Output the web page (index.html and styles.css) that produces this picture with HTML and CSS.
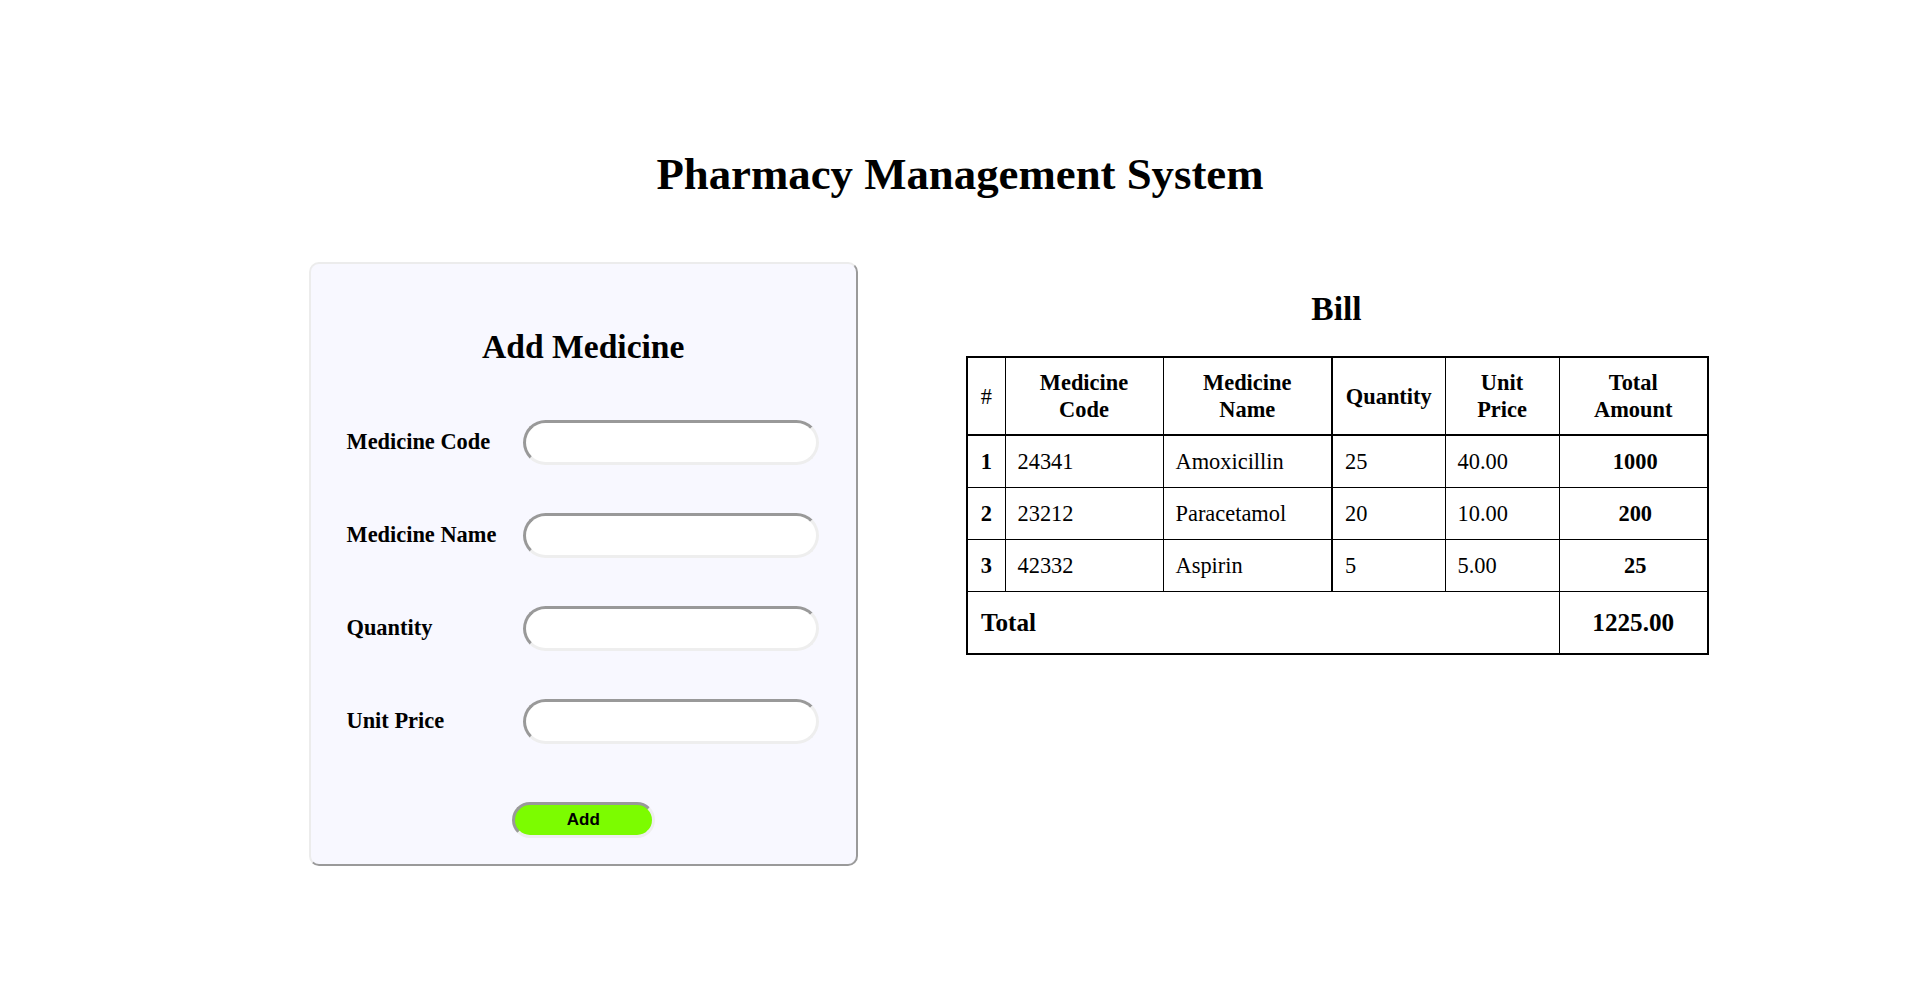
FILE: index.html
```html
<!DOCTYPE html>
<html lang="en">
<head>
<meta charset="utf-8">
<title>Pharmacy Management System</title>
<link rel="stylesheet" href="styles.css">
</head>
<body>
<header class="page-header">
  <h1 class="page-title">Pharmacy Management System</h1>
</header>
<main class="content">
  <section class="card">
    <h2 class="card-title">Add Medicine</h2>
    <form class="med-form">
      <div class="form-row">
        <label class="form-label" for="code">Medicine Code</label>
        <input class="form-input" id="code" type="text">
      </div>
      <div class="form-row">
        <label class="form-label" for="name">Medicine Name</label>
        <input class="form-input" id="name" type="text">
      </div>
      <div class="form-row">
        <label class="form-label" for="qty">Quantity</label>
        <input class="form-input" id="qty" type="text">
      </div>
      <div class="form-row">
        <label class="form-label" for="price">Unit Price</label>
        <input class="form-input" id="price" type="text">
      </div>
      <div class="form-actions">
        <button class="add-btn" type="button">Add</button>
      </div>
    </form>
  </section>
  <section class="bill">
    <h2 class="bill-title">Bill</h2>
    <table class="bill-table">
      <colgroup>
        <col class="c-num">
        <col class="c-code">
        <col class="c-name">
        <col class="c-qty">
        <col class="c-price">
        <col class="c-total">
      </colgroup>
      <thead>
        <tr>
          <th class="hash">#</th>
          <th class="wrap">Medicine Code</th>
          <th class="wrap split">Medicine Name</th>
          <th class="qty">Quantity</th>
          <th class="wrap">Unit Price</th>
          <th class="wrap">Total Amount</th>
        </tr>
      </thead>
      <tbody>
        <tr>
          <td class="idx">1</td>
          <td>24341</td>
          <td class="split">Amoxicillin</td>
          <td>25</td>
          <td>40.00</td>
          <td class="amount">1000</td>
        </tr>
        <tr>
          <td class="idx">2</td>
          <td>23212</td>
          <td class="split">Paracetamol</td>
          <td>20</td>
          <td>10.00</td>
          <td class="amount">200</td>
        </tr>
        <tr>
          <td class="idx">3</td>
          <td>42332</td>
          <td class="split">Aspirin</td>
          <td>5</td>
          <td>5.00</td>
          <td class="amount">25</td>
        </tr>
      </tbody>
      <tfoot>
        <tr class="total-row">
          <td class="total-label" colspan="5">Total</td>
          <td class="total-value">1225.00</td>
        </tr>
      </tfoot>
    </table>
  </section>
</main>
</body>
</html>
```
FILE: styles.css
```css
html, body {
  margin: 0;
  padding: 0;
  background: #ffffff;
}

body {
  font-family: "Liberation Serif", "Times New Roman", serif;
  font-size: 22.4px;
  color: #000000;
}

.page-header {
  padding-top: 148px;
  text-align: center;
}

.page-title {
  margin: 0;
  font-size: 44.8px;
  line-height: 52px;
  font-weight: bold;
}

.content {
  display: flex;
  align-items: flex-start;
  gap: 108px;
  margin-top: 62px;
  padding-left: 309px;
}

.card {
  box-sizing: border-box;
  width: 549px;
  height: 604px;
  padding: 63px 36px 0 35.5px;
  background: #f8f8ff;
  border: 2px solid;
  border-color: #ececec #9a9a9a #9a9a9a #ececec;
  border-radius: 10px;
}

.card-title {
  margin: 0;
  text-align: center;
  font-size: 33.6px;
  line-height: 40px;
  font-weight: bold;
}

.med-form {
  display: flex;
  flex-direction: column;
  gap: 48px;
  margin-top: 52.5px;
}

.form-row {
  display: flex;
  align-items: center;
}

.form-label {
  width: 176.5px;
  flex: none;
  font-weight: bold;
  font-size: 22.4px;
}

.form-input {
  box-sizing: border-box;
  width: 296px;
  height: 45px;
  margin: 0;
  padding: 0 16px;
  background: #ffffff;
  border: 3px solid;
  border-color: #999999 #eeeeee #eeeeee #999999;
  border-radius: 23px;
  font-family: "Liberation Sans", Arial, sans-serif;
  font-size: 18px;
  outline: none;
}

.form-actions {
  display: flex;
  justify-content: center;
  margin-top: 10px;
}

.add-btn {
  box-sizing: border-box;
  width: 143px;
  height: 36px;
  margin: 0;
  padding: 0;
  background: #7cfc00;
  border: 3px solid;
  border-color: #999999 #eeeeee #eeeeee #999999;
  border-radius: 18px;
  font-family: "Liberation Sans", Arial, sans-serif;
  font-size: 17px;
  font-weight: bold;
  color: #000000;
}

.bill {
  width: 741px;
  padding-top: 26.5px;
}

.bill-title {
  margin: 0;
  text-align: center;
  font-size: 33.6px;
  line-height: 40px;
  font-weight: bold;
}

.bill-table {
  margin-top: 27.5px;
  width: 741px;
  table-layout: fixed;
  border-collapse: collapse;
  border: 2px solid #000000;
  font-size: 22.4px;
  line-height: 27px;
}

.c-num { width: 38px; }
.c-code { width: 158px; }
.c-name { width: 169px; }
.c-qty { width: 113px; }
.c-price { width: 114px; }
.c-total { width: 149px; }

.bill-table th,
.bill-table td {
  border: 1px solid #000000;
  padding: 12px 8px 12px 12px;
  text-align: left;
  vertical-align: middle;
}

.bill-table th {
  text-align: center;
  font-weight: bold;
  padding: 11px 4px;
  border-bottom: 2px solid #000000;
}

.bill-table th.wrap {
  padding-left: 24px;
  padding-right: 24px;
}

.bill-table th.qty {
  padding-left: 2px;
  padding-right: 2px;
}

.bill-table th.hash {
  font-weight: normal;
}

.bill-table .split {
  border-right: 2px solid #000000;
}

.bill-table td.idx {
  text-align: center;
  font-weight: bold;
  padding-left: 4px;
  padding-right: 4px;
}

.bill-table td.amount {
  text-align: center;
  font-weight: bold;
}

.total-row td {
  font-size: 25.2px;
  line-height: 29px;
  font-weight: bold;
  padding-top: 16px;
  padding-bottom: 16px;
}

.bill-table td.total-label {
  padding-left: 13px;
}

.bill-table td.total-value {
  text-align: center;
  padding-left: 8px;
}
```
